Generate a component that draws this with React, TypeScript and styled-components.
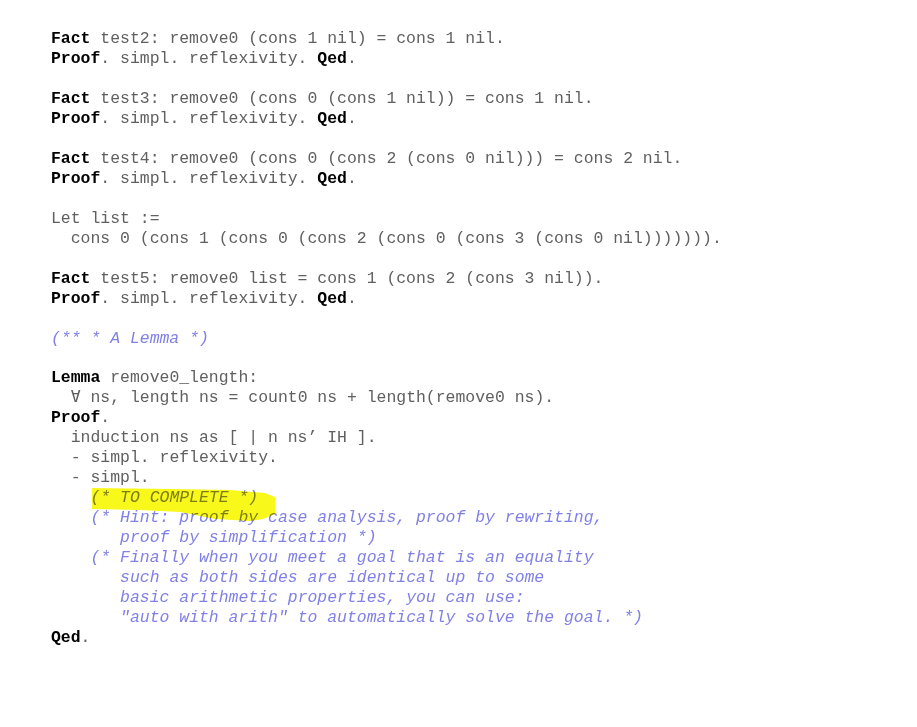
import React from "react";
import styled, { createGlobalStyle } from "styled-components";

const Global = createGlobalStyle`
  html, body { margin: 0; padding: 0; background: #ffffff; }
`;

const Page = styled.div`
  width: 917px;
  height: 727px;
  box-sizing: border-box;
  padding: 29px 0 0 51px;
  background: #ffffff;
`;

const CodeBlock = styled.div`
  position: relative;
  display: flex;
  flex-direction: column;
  font-family: "Liberation Mono", "Courier New", monospace;
  font-size: 16.45px;
  line-height: 19.97px;
  color: #606060;
`;

const Line = styled.div<{ $indent?: number }>`
  white-space: pre;
  height: 19.97px;
  padding-left: ${(p) => (p.$indent ?? 0) * 9.87}px;
`;

const Kw = styled.span`
  font-weight: bold;
  color: #000000;
`;

const Comment = styled.span`
  font-style: italic;
  color: #8080e6;
`;

const Highlight = styled.svg`
  position: absolute;
  left: 0;
  top: 0;
  width: 300px;
  height: 520px;
  pointer-events: none;
  mix-blend-mode: multiply;
  overflow: visible;
`;

type L = { indent?: number; content: React.ReactNode };

const lines: L[] = [
  { content: <><Kw>Fact</Kw> test2: remove0 (cons 1 nil) = cons 1 nil.</> },
  { content: <><Kw>Proof</Kw>. simpl. reflexivity. <Kw>Qed</Kw>.</> },
  { content: "" },
  { content: <><Kw>Fact</Kw> test3: remove0 (cons 0 (cons 1 nil)) = cons 1 nil.</> },
  { content: <><Kw>Proof</Kw>. simpl. reflexivity. <Kw>Qed</Kw>.</> },
  { content: "" },
  { content: <><Kw>Fact</Kw> test4: remove0 (cons 0 (cons 2 (cons 0 nil))) = cons 2 nil.</> },
  { content: <><Kw>Proof</Kw>. simpl. reflexivity. <Kw>Qed</Kw>.</> },
  { content: "" },
  { content: "Let list :=" },
  { indent: 2, content: "cons 0 (cons 1 (cons 0 (cons 2 (cons 0 (cons 3 (cons 0 nil)))))))." },
  { content: "" },
  { content: <><Kw>Fact</Kw> test5: remove0 list = cons 1 (cons 2 (cons 3 nil)).</> },
  { content: <><Kw>Proof</Kw>. simpl. reflexivity. <Kw>Qed</Kw>.</> },
  { content: "" },
  { content: <Comment>(** * A Lemma *)</Comment> },
  { content: "" },
  { content: <><Kw>Lemma</Kw> remove0_length:</> },
  { indent: 2, content: "∀ ns, length ns = count0 ns + length(remove0 ns)." },
  { content: <><Kw>Proof</Kw>.</> },
  { indent: 2, content: "induction ns as [ | n ns’ IH ]." },
  { indent: 2, content: "- simpl. reflexivity." },
  { indent: 2, content: "- simpl." },
  { indent: 4, content: <Comment>(* TO COMPLETE *)</Comment> },
  { indent: 4, content: <Comment>(* Hint: proof by case analysis, proof by rewriting,</Comment> },
  { indent: 7, content: <Comment>proof by simplification *)</Comment> },
  { indent: 4, content: <Comment>(* Finally when you meet a goal that is an equality</Comment> },
  { indent: 7, content: <Comment>such as both sides are identical up to some</Comment> },
  { indent: 7, content: <Comment>basic arithmetic properties, you can use:</Comment> },
  { indent: 7, content: <Comment>"auto with arith" to automatically solve the goal. *)</Comment> },
  { content: <><Kw>Qed</Kw>.</> },
];

export default function App() {
  return (
    <>
      <Global />
      <Page>
        <CodeBlock>
          {lines.map((l, i) => (
            <Line key={i} $indent={l.indent}>
              {l.content}
            </Line>
          ))}
          <Highlight viewBox="0 0 300 520">
            <polygon
              points="41,459 120,460 179,461 214,464 224,468 224,485 212,490 199,492 164,490 129,483 89,481 41,480"
              fill="#f8f81a"
            />
          </Highlight>
        </CodeBlock>
      </Page>
    </>
  );
}
